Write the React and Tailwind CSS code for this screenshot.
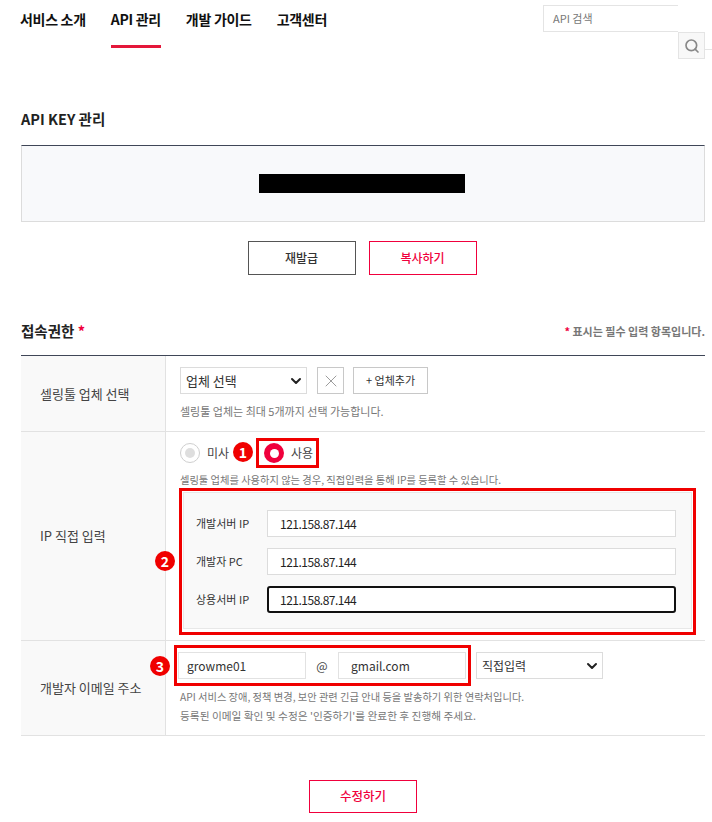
import { Search, ChevronDown, X } from "lucide-react";

const font = { fontFamily: '"Noto Sans CJK KR", "Noto Sans", sans-serif' };

function Badge({ n, className }) {
  return (
    <span
      className={`absolute flex h-5 w-5 items-center justify-center rounded-full bg-[#f00000] text-[14px] font-bold text-white ${className}`}
    >
      {n}
    </span>
  );
}

function Select({ label, className }) {
  return (
    <div
      className={`flex h-[27px] items-center justify-between border border-[#dcdcdc] bg-white pl-[5px] pr-[2px] text-[#333] ${className}`}
    >
      <span>{label}</span>
      <ChevronDown size={16} strokeWidth={3} className="text-[#222]" />
    </div>
  );
}

function IpRow({ label, active }) {
  return (
    <div className="flex items-center">
      <span className="w-[71px] text-[11px] text-[#333]">{label}</span>
      <div
        className={`flex h-[27px] w-[409px] items-center bg-white text-[12px] tracking-[-0.5px] text-[#222] ${
          active ? "rounded-[3px] border-2 border-[#111] pl-[11px]" : "border border-[#dcdcdc] pl-3"
        }`}
      >
        121.158.87.144
      </div>
    </div>
  );
}

function Row({ label, className, children }) {
  return (
    <div className={`flex border-b border-[#e2e2e2] ${className}`}>
      <div className="flex w-[145px] shrink-0 items-center border-r border-[#e2e2e2] bg-[#f9f9f9] pl-[19px] text-[13px] text-[#444]">
        {label}
      </div>
      <div className="relative flex-1 pl-[14px]">{children}</div>
    </div>
  );
}

export default function App() {
  return (
    <div style={font} className="relative h-[822px] w-[712px] overflow-hidden bg-white">
      <header className="relative flex h-12 items-start pl-5">
        <nav className="flex gap-[25px] pt-[9px] text-[14px] font-bold tracking-[-0.3px] text-[#111]">
          <span>서비스 소개</span>
          <span className="relative">
            API 관리
            <span className="absolute left-0 right-0 top-[36px] h-[3px] bg-[#e4173a]" />
          </span>
          <span>개발 가이드</span>
          <span>고객센터</span>
        </nav>
        <div className="absolute left-[543px] top-[5px] flex h-[27px] w-[135px] items-center border border-r-0 border-[#e4e4e4] pl-[9px] text-[11px] text-[#777]">
          API 검색
        </div>
        <div className="absolute left-[678px] top-[32px] flex h-[27px] w-[27px] items-center justify-center border border-[#e4e4e4] bg-[#f8f8f8]">
          <Search size={16} strokeWidth={2.5} className="text-[#888]" />
        </div>
        <span className="absolute left-[705px] top-[49px] h-px w-[7px] bg-[#e4e4e4]" />
      </header>

      <main className="px-[21px] pr-[7px]">
        <h2 className="mt-[60px] text-[14.5px] font-bold leading-[22px] text-[#222]">API KEY 관리</h2>
        <div className="mt-[15px] flex h-[77px] items-center justify-center border border-t-[#3f4657] border-[#dcdcdc] bg-[#f8f9fb] pr-[2px]">
          <div className="h-[19px] w-[206px] bg-black" />
        </div>
        <div className="mt-[19px] flex justify-center gap-[13px] pr-[2px]">
          <button className="h-[34px] w-[108px] border border-[#555] bg-white text-[12px] font-medium text-[#333]">
            재발급
          </button>
          <button className="h-[34px] w-[108px] border border-[#f0003c] bg-white text-[12px] font-medium text-[#f0003c]">
            복사하기
          </button>
        </div>

        <div className="mt-[45px] flex items-center justify-between">
          <h2 className="text-[14.5px] font-bold leading-[22px] text-[#222]">
            접속권한 <span className="text-[#f0003c]">*</span>
          </h2>
          <p className="text-[11px] font-bold text-[#777]">
            <span className="text-[#f0003c]">*</span> 표시는 필수 입력 항목입니다.
          </p>
        </div>

        <div className="mt-[13px] border-t border-[#3f4657]">
          <Row label="셀링툴 업체 선택" className="h-[76px]">
            <div className="flex items-center pt-[11px]">
              <Select label="업체 선택" className="w-[127px] text-[13px]" />
              <div className="ml-[10px] flex h-[27px] w-[27px] items-center justify-center border border-[#c8c8c8]">
                <X size={20} strokeWidth={1} className="text-[#888]" />
              </div>
              <div className="ml-[9px] flex h-[27px] w-[75px] items-center justify-center border border-[#c8c8c8] text-[11px] text-[#333]">
                + 업체추가
              </div>
            </div>
            <p className="mt-[9px] text-[11px] leading-[16px] text-[#777]">
              셀링툴 업체는 최대 5개까지 선택 가능합니다.
            </p>
          </Row>

          <Row label="IP 직접 입력" className="h-[209px]">
            <div className="flex h-[41px] items-center pt-[1px]">
              <span className="flex h-5 w-5 items-center justify-center rounded-full border border-[#cfcfcf]">
                <span className="h-2.5 w-2.5 rounded-full bg-[#dedede]" />
              </span>
              <span className="ml-[7px] text-[12px] text-[#444]">미사</span>
              <div className="absolute left-[90px] top-[6px] flex h-[30px] w-[63px] items-center border-[3px] border-[#f00000] pl-[5px]">
                <span className="flex h-5 w-5 items-center justify-center rounded-full bg-[#f0003c]">
                  <span className="h-[9px] w-[9px] rounded-full bg-white" />
                </span>
                <span className="ml-[7px] text-[12px] text-[#444]">사용</span>
              </div>
              <Badge n="1" className="left-[67px] top-[10px]" />
            </div>
            <p className="text-[10.25px] leading-[14px] text-[#777]">
              셀링툴 업체를 사용하지 않는 경우, 직접입력을 통해 IP를 등록할 수 있습니다.
            </p>
            <div className="-ml-[1px] mt-[1px] h-[147px] w-[517px] border-[3px] border-[#f00000] p-[1px]">
              <div className="flex h-[137px] flex-col gap-[11px] border border-[#e8e8e8] bg-[#f9f9f9] pl-[12px] pt-[17px]">
                <IpRow label="개발서버 IP" />
                <IpRow label="개발자 PC" />
                <IpRow label="상용서버 IP" active />
              </div>
            </div>
            <Badge n="2" className="-left-[11px] top-[119px]" />
          </Row>

          <Row label="개발자 이메일 주소" className="h-[95px]">
            <div className="flex items-center pt-[11px]">
              <div className="-ml-[2px] flex h-[27px] w-[128px] items-center border border-[#e2e2e2] px-2 text-[12px] text-[#333]">
                growme01
              </div>
              <span className="w-[32px] text-center text-[12px] text-[#444]">@</span>
              <div className="flex h-[27px] w-[128px] items-center border border-[#e2e2e2] pl-3 text-[12px] text-[#333]">
                gmail.com
              </div>
              <Select label="직접입력" className="ml-[10px] w-[127px] text-[12px]" />
            </div>
            <div className="absolute left-[8px] top-[4px] h-[41px] w-[297px] border-[3px] border-[#f00000]" />
            <Badge n="3" className="-left-[16px] top-[15px]" />
            <p className="mt-[8px] leading-[19px] text-[#777]">
              <span className="block text-[10.25px]">
                API 서비스 장애, 정책 변경, 보안 관련 긴급 안내 등을 발송하기 위한 연락처입니다.
              </span>
              <span className="block text-[10.7px]">
                등록된 이메일 확인 및 수정은 '인증하기'를 완료한 후 진행해 주세요.
              </span>
            </p>
          </Row>
        </div>

        <div className="mt-[44px] flex justify-center">
          <button className="h-[33px] w-[108px] border border-[#f0003c] bg-white text-[12.5px] font-medium text-[#f0003c]">
            수정하기
          </button>
        </div>
      </main>
    </div>
  );
}
